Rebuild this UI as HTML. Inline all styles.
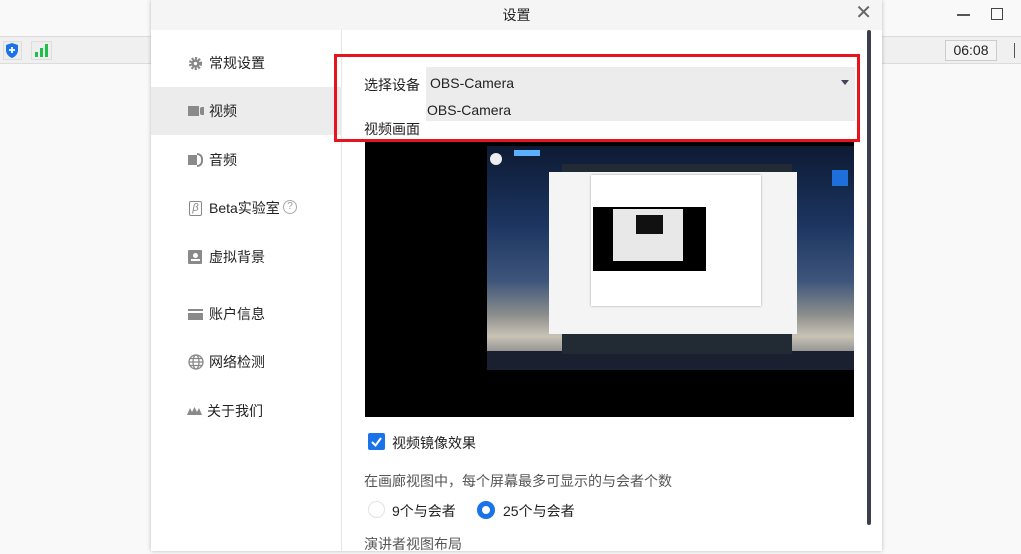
<!DOCTYPE html>
<html><head><meta charset="utf-8"><style>
*{margin:0;padding:0;box-sizing:border-box}
body{width:1021px;height:551px;overflow:hidden;background:#f9f9f9;font-family:"Liberation Sans","Noto Sans CJK SC",sans-serif;position:relative;color:#222}
.abs{position:absolute}
.strip{left:0;top:36px;width:1021px;height:28px;background:#f0f0f0;border-top:1px solid #dcdcdc;border-bottom:1px solid #dcdcdc}
.dlg{left:151px;top:0;width:731px;height:551px;background:#fff;box-shadow:0 0 4px rgba(0,0,0,.25)}
.title{left:0;top:0;width:731px;height:30px;background:#f5f5f5;text-align:center;font-size:14px;line-height:30px;color:#222}
.side{left:0;top:30px;width:191px;height:521px;border-right:1px solid #e6e6e6}
.item{position:absolute;left:0;width:190px;height:48px;font-size:14px;line-height:48px;color:#222}
.item .ic{position:absolute;left:37px;top:17px;width:15px;height:14px;background:#8a8a8a}
.item span{position:absolute;left:58px}
.lbl{font-size:14px;color:#222}
</style></head><body>
<div class="abs strip"></div>
<div class="abs" style="left:3px;top:41px;width:19px;height:19px;border:1px solid #ddd;background:#eee"></div>
<svg class="abs" style="left:5px;top:42px" width="14" height="17"><path d="M7 1L13 3V8C13 12 10 15 7 16C4 15 1 12 1 8V3Z" fill="#1a73e8"/><path d="M7 5V11M4 8H10" stroke="#fff" stroke-width="1.8"/></svg>
<div class="abs" style="left:31px;top:41px;width:21px;height:19px;border:1px solid #ddd;background:#eee"></div>
<div class="abs" style="left:35px;top:52px;width:3px;height:5px;background:#1fbf4c"></div>
<div class="abs" style="left:40px;top:48px;width:3px;height:9px;background:#1fbf4c"></div>
<div class="abs" style="left:45px;top:44px;width:3px;height:13px;background:#1fbf4c"></div>
<div class="abs" style="left:957px;top:14px;width:13px;height:1.5px;background:#555"></div>
<div class="abs" style="left:991px;top:8px;width:12px;height:12px;border:1.5px solid #444"></div>
<div class="abs" style="left:945px;top:40px;width:52px;height:21px;border:1px solid #ccc;background:#f4f4f4;font-size:14px;line-height:19px;text-align:center;color:#222">06:08</div>
<div class="abs" style="left:1014px;top:43px;width:7px;height:15px;border-left:1.5px solid #555"></div>

<div class="abs dlg">
 <div class="abs title">设置</div>
 <div class="abs" style="right:10px;top:3px;font-size:20px;color:#666;line-height:20px">✕</div>
 <div class="abs side">
  <div class="item" style="top:9px"><svg class="abs" style="left:37px;top:17px" width="15" height="15" viewBox="0 0 16 16"><circle cx="8" cy="8" r="5.5" fill="none" stroke="#888" stroke-width="3" stroke-dasharray="2.2 1.4"/><circle cx="8" cy="8" r="4.5" fill="#888"/><circle cx="8" cy="8" r="1.8" fill="#fff"/></svg><span>常规设置</span></div>
  <div class="item" style="top:57px;background:#ececec;width:191px"><div class="ic" style="top:19px;height:10px;width:11px"></div><div class="abs" style="left:49px;top:20px;width:4px;height:8px;background:#8a8a8a;border-radius:2px 0 0 2px"></div><span>视频</span></div>
  <div class="item" style="top:106px"><div class="ic" style="top:19px;height:10px;width:9px"></div><div class="abs" style="left:46px;top:17px;width:6px;height:14px;border:2px solid #8a8a8a;border-left:none;border-radius:0 7px 7px 0"></div><span>音频</span></div>
  <div class="item" style="top:154px"><div class="abs" style="left:38px;top:17px;width:13px;height:15px;border:1.5px solid #888;border-radius:2px;font-size:11px;line-height:12px;text-align:center;color:#888;font-style:italic">β</div><span>Beta实验室</span><div class="abs" style="left:132px;top:16px;width:14px;height:14px;border:1px solid #aaa;border-radius:50%;font-size:10px;line-height:12px;text-align:center;color:#999">?</div></div>
  <div class="item" style="top:203px"><div class="ic" style="width:14px;height:14px;border-radius:1px"></div><div class="abs" style="left:42px;top:20px;width:5px;height:5px;background:#fff;border-radius:50%"></div><div class="abs" style="left:40px;top:26px;width:9px;height:2px;background:#fff"></div><span>虚拟背景</span></div>
  <div class="item" style="top:260px"><div class="ic" style="top:19px;height:11px"></div><div class="abs" style="left:37px;top:21px;width:15px;height:2px;background:#fff"></div><span>账户信息</span></div>
  <div class="item" style="top:308px"><svg class="abs" style="left:37px;top:16px" width="16" height="16" viewBox="0 0 16 16" fill="none" stroke="#888" stroke-width="1.3"><circle cx="8" cy="8" r="7"/><ellipse cx="8" cy="8" rx="3" ry="7"/><path d="M1 8H15M2 4.5H14M2 11.5H14"/></svg><span>网络检测</span></div>
  <div class="item" style="top:357px"><svg class="abs" style="left:36px;top:19px" width="15" height="10" viewBox="0 0 15 10"><path d="M0 9L3 2L5 6L7.5 1L10 6L12 2L15 9Z" fill="#8a8a8a"/></svg><span style="left:56px">关于我们</span></div>
 </div>
 <div class="abs" style="left:716px;top:30px;width:4px;height:495px;background:#3a3f4b;border-radius:2px"></div>
</div>

<!-- content -->
<div class="abs lbl" style="left:364px;top:75px">选择设备</div>
<div class="abs" style="left:426px;top:67px;width:429px;height:54px;background:#ececec"></div>
<div class="abs" style="left:430px;top:75px;font-size:14px;color:#222">OBS-Camera</div>
<div class="abs" style="left:841px;top:80px;width:0;height:0;border-left:4px solid transparent;border-right:4px solid transparent;border-top:5px solid #445"></div>
<div class="abs" style="left:427px;top:102px;font-size:14px;color:#222">OBS-Camera</div>
<div class="abs lbl" style="left:364px;top:119px">视频画面</div>
<div class="abs" style="left:334px;top:54px;width:526px;height:88px;border:3px solid #e8141d"></div>

<div class="abs" style="left:365px;top:142px;width:489px;height:275px;background:#000;overflow:hidden">
 <div class="abs" style="left:122px;top:4px;width:367px;height:224px;background:linear-gradient(180deg,#0d1a33 0%,#1c3560 35%,#3d557a 60%,#8a8c8c 75%,#c9c3b5 85%,#505a6a 100%)"></div>
 <div class="abs" style="left:122px;top:209px;width:367px;height:19px;background:#1a2030"></div>
 <div class="abs" style="left:125px;top:11px;width:12px;height:12px;background:#eee;border-radius:50%"></div>
 <div class="abs" style="left:149px;top:8px;width:26px;height:6px;background:#5ab0ff"></div>
 <div class="abs" style="left:197px;top:22px;width:230px;height:190px;background:#222a33"></div>
 <div class="abs" style="left:184px;top:30px;width:248px;height:162px;background:#f4f4f4"></div>
 <div class="abs" style="left:226px;top:33px;width:170px;height:131px;background:#fff;box-shadow:0 0 2px #999"></div>
 <div class="abs" style="left:228px;top:65px;width:113px;height:64px;background:#000"></div>
 <div class="abs" style="left:248px;top:67px;width:70px;height:52px;background:#e8e8e8"></div>
 <div class="abs" style="left:271px;top:73px;width:27px;height:19px;background:#111"></div>
 <div class="abs" style="left:467px;top:28px;width:16px;height:16px;background:#1e6fd9"></div>
</div>

<div class="abs" style="left:368px;top:433px;width:17px;height:17px;background:#1a73e8;border-radius:2px"></div>
<svg class="abs" style="left:368px;top:433px" width="17" height="17"><path d="M4 9L7.5 12.5L13 5" fill="none" stroke="#fff" stroke-width="2"/></svg>
<div class="abs lbl" style="left:392px;top:433px">视频镜像效果</div>
<div class="abs" style="left:364px;top:471px;font-size:14px;color:#555">在画廊视图中，每个屏幕最多可显示的与会者个数</div>
<div class="abs" style="left:368px;top:501px;width:17px;height:17px;border:1px solid #e2e2e2;border-radius:50%"></div>
<div class="abs lbl" style="left:392px;top:501px">9个与会者</div>
<div class="abs" style="left:477px;top:501px;width:18px;height:18px;border:5px solid #1a73e8;border-radius:50%"></div>
<div class="abs lbl" style="left:503px;top:501px">25个与会者</div>
<div class="abs" style="left:364px;top:534px;font-size:14px;color:#555">演讲者视图布局</div>
</body></html>
